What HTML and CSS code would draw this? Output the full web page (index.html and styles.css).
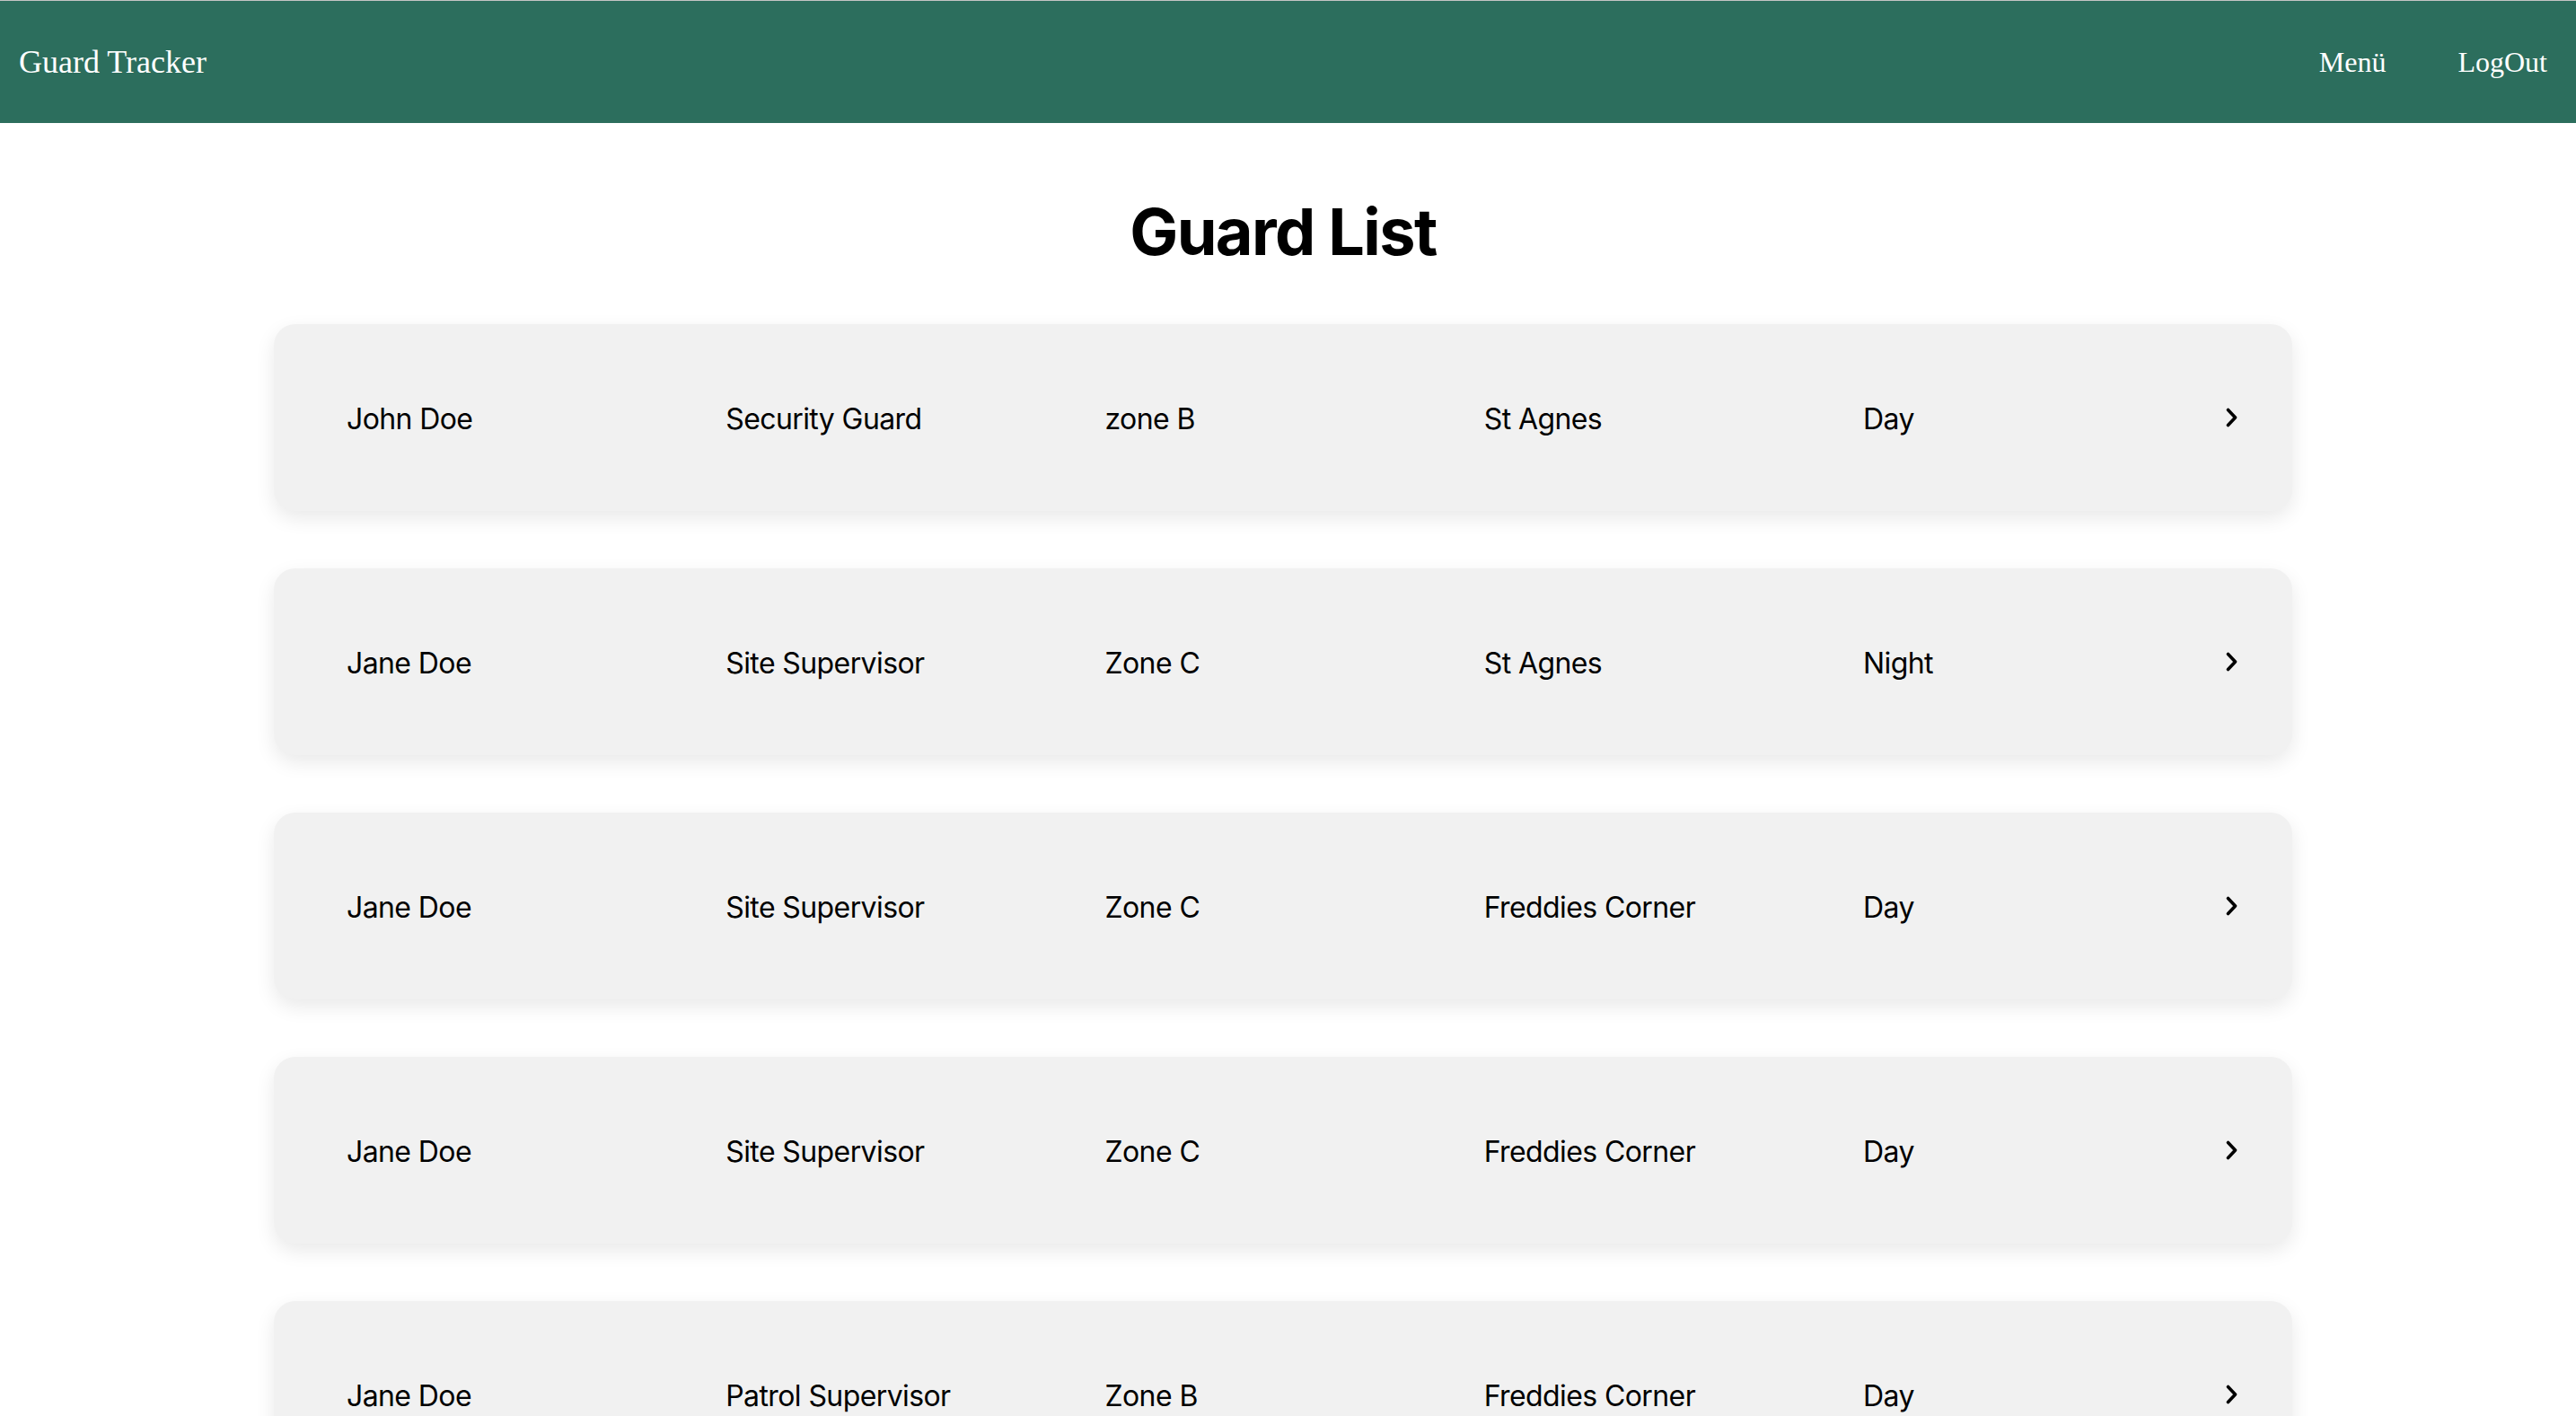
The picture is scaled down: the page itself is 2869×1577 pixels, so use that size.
FILE: index.html
```html
<!DOCTYPE html>
<html lang="en">
<head>
<meta charset="utf-8">
<title>Guard Tracker</title>
<link rel="stylesheet" href="styles.css">
</head>
<body>
<header class="topbar">
  <div class="brand">Guard Tracker</div>
  <nav class="nav">
    <a class="nav-link" href="#">Menü</a>
    <a class="nav-link" href="#">LogOut</a>
  </nav>
</header>
<main class="content">
  <h1 class="title">Guard List</h1>
  <ul class="guard-list">
    <li class="guard-card">
      <span class="cell">John Doe</span>
      <span class="cell">Security Guard</span>
      <span class="cell">zone B</span>
      <span class="cell">St Agnes</span>
      <span class="cell">Day</span>
      <svg class="chevron" viewBox="0 0 14 22" width="14" height="22"><path d="M2.5 2.5 L10.5 11 L2.5 19.5"/></svg>
    </li>
    <li class="guard-card">
      <span class="cell">Jane Doe</span>
      <span class="cell">Site Supervisor</span>
      <span class="cell">Zone C</span>
      <span class="cell">St Agnes</span>
      <span class="cell">Night</span>
      <svg class="chevron" viewBox="0 0 14 22" width="14" height="22"><path d="M2.5 2.5 L10.5 11 L2.5 19.5"/></svg>
    </li>
    <li class="guard-card">
      <span class="cell">Jane Doe</span>
      <span class="cell">Site Supervisor</span>
      <span class="cell">Zone C</span>
      <span class="cell">Freddies Corner</span>
      <span class="cell">Day</span>
      <svg class="chevron" viewBox="0 0 14 22" width="14" height="22"><path d="M2.5 2.5 L10.5 11 L2.5 19.5"/></svg>
    </li>
    <li class="guard-card">
      <span class="cell">Jane Doe</span>
      <span class="cell">Site Supervisor</span>
      <span class="cell">Zone C</span>
      <span class="cell">Freddies Corner</span>
      <span class="cell">Day</span>
      <svg class="chevron" viewBox="0 0 14 22" width="14" height="22"><path d="M2.5 2.5 L10.5 11 L2.5 19.5"/></svg>
    </li>
    <li class="guard-card">
      <span class="cell">Jane Doe</span>
      <span class="cell">Patrol Supervisor</span>
      <span class="cell">Zone B</span>
      <span class="cell">Freddies Corner</span>
      <span class="cell">Day</span>
      <svg class="chevron" viewBox="0 0 14 22" width="14" height="22"><path d="M2.5 2.5 L10.5 11 L2.5 19.5"/></svg>
    </li>
    <li class="guard-card">
      <span class="cell">John Doe</span>
      <span class="cell">Security Guard</span>
      <span class="cell">Zone A</span>
      <span class="cell">St Agnes</span>
      <span class="cell">Night</span>
      <svg class="chevron" viewBox="0 0 14 22" width="14" height="22"><path d="M2.5 2.5 L10.5 11 L2.5 19.5"/></svg>
    </li>
  </ul>
</main>
</body>
</html>
```
FILE: styles.css
```css
html, body {
  margin: 0;
  padding: 0;
  background: #ffffff;
}

body {
  font-family: Inter, "Noto Sans", "Liberation Sans", sans-serif;
  color: #000;
}

.topbar {
  box-sizing: border-box;
  height: 137px;
  border-top: 1px solid #c4c4c4;
  background: #2c6e5d;
  display: flex;
  align-items: center;
  justify-content: space-between;
  padding: 0 32px 0 21px;
  font-family: "Liberation Serif", "Times New Roman", serif;
  color: #ffffff;
}

.brand {
  font-size: 36px;
}

.nav {
  display: flex;
  gap: 80px;
}

.nav-link {
  font-size: 32px;
  color: #ffffff;
  text-decoration: none;
}

.content {
  margin: 0 316px 0 305px;
}

.title {
  margin: 77px 0 0;
  font-size: 72px;
  font-weight: 700;
  line-height: 87px;
  text-align: center;
  letter-spacing: -1.6px;
}

.guard-list {
  list-style: none;
  margin: 60px 0 0;
  padding: 0;
  display: flex;
  flex-direction: column;
  gap: 64px;
}

.guard-card {
  box-sizing: border-box;
  height: 208px;
  background: #f1f1f1;
  border-radius: 24px;
  box-shadow: 0 8px 22px rgba(0, 0, 0, 0.09);
  display: grid;
  grid-template-columns: repeat(4, 422.25px) 1fr auto;
  align-items: center;
  padding: 0 60px 0 81px;
  font-size: 32px;
}

.cell {
  white-space: nowrap;
  letter-spacing: -0.6px;
  padding-top: 3px;
}

.chevron {
  display: block;
  fill: none;
  stroke: #000;
  stroke-width: 3.6;
  stroke-linecap: round;
  stroke-linejoin: round;
}
```
